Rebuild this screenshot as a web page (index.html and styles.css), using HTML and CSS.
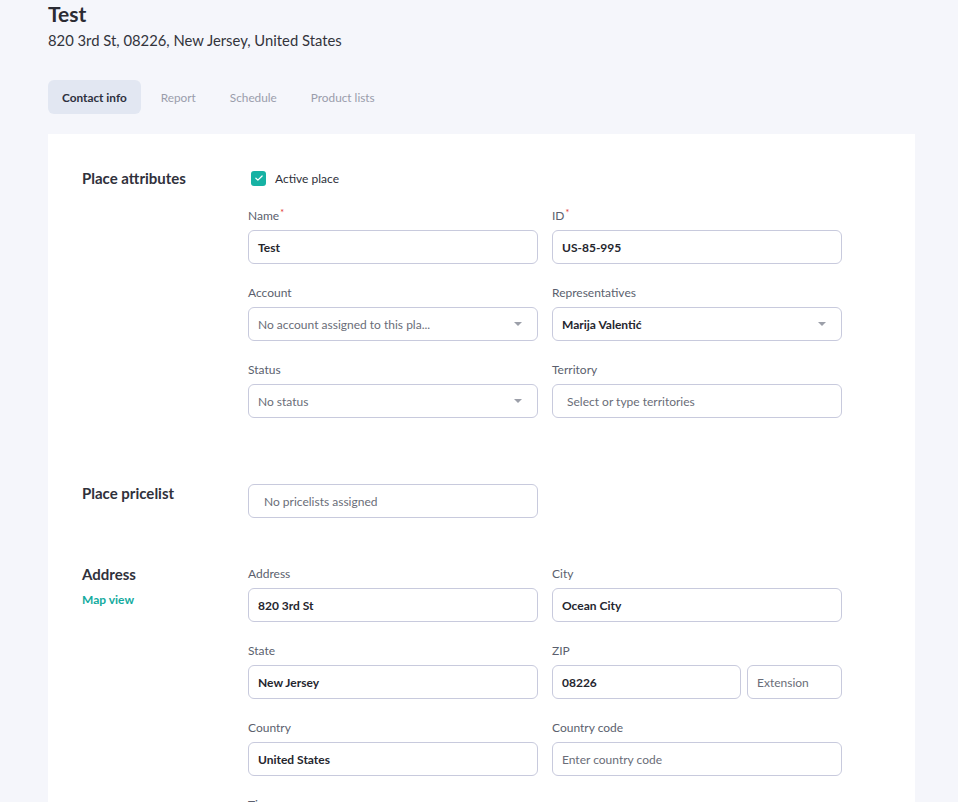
FILE: index.html
```html
<!DOCTYPE html>
<html lang="en">
<head>
<meta charset="utf-8">
<title>Test – Place</title>
<link rel="stylesheet" href="styles.css">
</head>
<body>
<div class="page">
  <header class="place-header">
    <h1 class="place-title">Test</h1>
    <p class="place-address">820 3rd St, 08226, New Jersey, United States</p>
  </header>

  <nav class="tabs">
    <span class="tab tab-active">Contact info</span>
    <span class="tab">Report</span>
    <span class="tab">Schedule</span>
    <span class="tab">Product lists</span>
  </nav>

  <main class="card">
    <section class="section section-attributes">
      <div class="section-side">
        <h2 class="section-title">Place attributes</h2>
      </div>
      <div class="section-body">
        <label class="checkbox-row">
          <span class="checkbox">
            <svg viewBox="0 0 16 16" width="10" height="10"><path d="M3 8.3l3.2 3.1L13 4.7" fill="none" stroke="#fff" stroke-width="2" stroke-linecap="round" stroke-linejoin="round"/></svg>
          </span>
          <span class="checkbox-text">Active place</span>
        </label>
        <div class="field-grid">
          <div class="field">
            <div class="field-label">Name<span class="req">*</span></div>
            <div class="input"><span class="value">Test</span></div>
          </div>
          <div class="field">
            <div class="field-label">ID<span class="req">*</span></div>
            <div class="input"><span class="value">US-85-995</span></div>
          </div>
          <div class="field">
            <div class="field-label">Account</div>
            <div class="input select"><span class="placeholder">No account assigned to this pla...</span><span class="caret"></span></div>
          </div>
          <div class="field">
            <div class="field-label">Representatives</div>
            <div class="input select"><span class="value">Marija Valentić</span><span class="caret"></span></div>
          </div>
          <div class="field">
            <div class="field-label">Status</div>
            <div class="input select"><span class="placeholder">No status</span><span class="caret"></span></div>
          </div>
          <div class="field">
            <div class="field-label">Territory</div>
            <div class="input input-wide-pad"><span class="placeholder">Select or type territories</span></div>
          </div>
        </div>
      </div>
    </section>

    <section class="section section-pricelist">
      <div class="section-side">
        <h2 class="section-title">Place pricelist</h2>
      </div>
      <div class="section-body">
        <div class="field-grid">
          <div class="input input-pricelist"><span class="placeholder">No pricelists assigned</span></div>
        </div>
      </div>
    </section>

    <section class="section section-address">
      <div class="section-side">
        <h2 class="section-title">Address</h2>
        <a class="map-link">Map view</a>
      </div>
      <div class="section-body">
        <div class="field-grid">
          <div class="field">
            <div class="field-label">Address</div>
            <div class="input"><span class="value">820 3rd St</span></div>
          </div>
          <div class="field">
            <div class="field-label">City</div>
            <div class="input"><span class="value">Ocean City</span></div>
          </div>
          <div class="field">
            <div class="field-label">State</div>
            <div class="input"><span class="value">New Jersey</span></div>
          </div>
          <div class="field">
            <div class="field-label">ZIP</div>
            <div class="zip-row">
              <div class="input"><span class="value">08226</span></div>
              <div class="input input-ext"><span class="placeholder">Extension</span></div>
            </div>
          </div>
          <div class="field">
            <div class="field-label">Country</div>
            <div class="input"><span class="value">United States</span></div>
          </div>
          <div class="field">
            <div class="field-label">Country code</div>
            <div class="input"><span class="placeholder">Enter country code</span></div>
          </div>
          <div class="field">
            <div class="field-label">Time zone</div>
            <div class="input"><span class="placeholder"></span></div>
          </div>
        </div>
      </div>
    </section>
  </main>
</div>
</body>
</html>
```

FILE: styles.css
```css
* {
  box-sizing: border-box;
}

html, body {
  margin: 0;
  padding: 0;
}

body {
  background: #f5f6fb;
  font-family: Lato, "Open Sans", Arial, sans-serif;
  color: #2b2c36;
  height: 802px;
  overflow: hidden;
}

.page {
  padding-left: 48px;
  width: 915px;
}

/* Header */
.place-header {
  padding-top: 1px;
}

.place-title {
  margin: 0;
  font-size: 21px;
  line-height: 26px;
  font-weight: 700;
  color: #2b2b33;
}

.place-address {
  margin: 3px 0 0;
  font-size: 14.8px;
  line-height: 20px;
  color: #33343c;
}

/* Tabs */
.tabs {
  display: flex;
  gap: 6px;
  margin-top: 30px;
}

.tab {
  display: flex;
  align-items: center;
  height: 34px;
  padding: 0 14px;
  border-radius: 6px;
  font-size: 11.8px;
  color: #9a9dab;
}

.tab-active {
  background: #e2e7f2;
  color: #2d3040;
  font-weight: 700;
}

/* Card */
.card {
  margin-top: 20px;
  background: #fff;
  padding: 36px 34px 40px;
  min-height: 700px;
}

.section {
  display: grid;
  grid-template-columns: 166px 1fr;
}

.section-pricelist {
  margin-top: 66px;
}

.section-address {
  margin-top: 48px;
}

.section-title {
  margin: 0;
  font-size: 15px;
  line-height: 18px;
  font-weight: 700;
  color: #30313b;
}

.section-attributes .section-title {
  margin-top: -1px;
}

.section-pricelist .section-title {
  margin-top: 0;
}

.section-address .section-title {
  margin-top: -1px;
}

.map-link {
  display: block;
  margin-top: 9px;
  font-size: 12px;
  line-height: 16px;
  font-weight: 700;
  color: #14aba0;
}

/* Checkbox */
.checkbox-row {
  display: flex;
  align-items: center;
  height: 16px;
  margin-left: 3px;
  margin-bottom: 19px;
}

.checkbox {
  display: flex;
  align-items: center;
  justify-content: center;
  width: 15px;
  height: 15px;
  border-radius: 3px;
  background: #16b2a4;
}

.checkbox-text {
  margin-left: 9px;
  font-size: 12px;
  color: #2d2f3a;
}

/* Fields */
.field-grid {
  display: grid;
  grid-template-columns: 290px 290px;
  column-gap: 14px;
  row-gap: 21px;
}

.field-label {
  font-size: 12px;
  line-height: 15px;
  margin-bottom: 7px;
  color: #5b5f6e;
}

.req {
  color: #e0302b;
  font-size: 9px;
  vertical-align: 4px;
  margin-left: 1px;
}

.input {
  display: flex;
  align-items: center;
  height: 34px;
  padding: 0 9px;
  border: 1px solid #c8cadd;
  border-radius: 6px;
  background: #fff;
  font-size: 12px;
}

.input-wide-pad {
  padding-left: 14px;
}

.input-pricelist {
  padding-left: 15px;
}

.value {
  font-weight: 700;
  color: #25262e;
}

.placeholder {
  color: #6a6d78;
}

.select {
  justify-content: space-between;
  padding-right: 15px;
}

.caret {
  width: 0;
  height: 0;
  border-left: 4px solid transparent;
  border-right: 4px solid transparent;
  border-top: 4px solid #9c9fa9;
}

.zip-row {
  display: flex;
  gap: 6px;
}

.zip-row .input {
  flex: 1;
}

.zip-row .input-ext {
  flex: 0 0 95px;
}
```
